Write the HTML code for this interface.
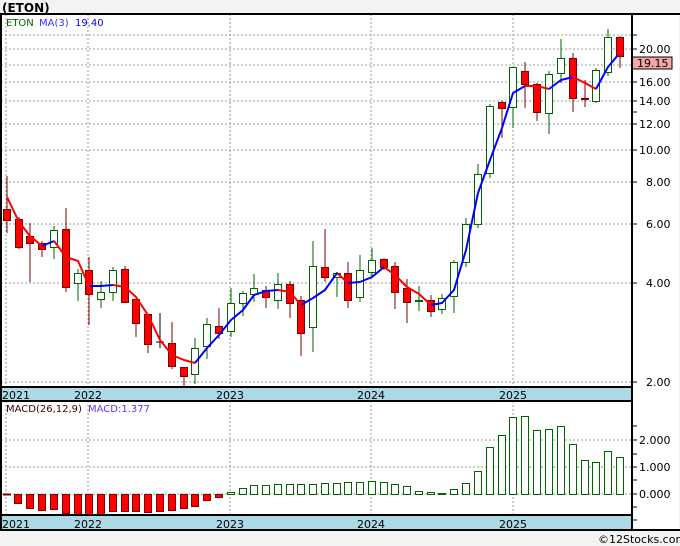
<!DOCTYPE html>
<html><head><meta charset="utf-8"><style>
html,body{margin:0;padding:0;background:#f3f3f3;}
svg{display:block;font-family:"DejaVu Sans","Liberation Sans",sans-serif;}
</style></head><body>
<svg width="680" height="546" viewBox="0 0 680 546" xmlns="http://www.w3.org/2000/svg">
<rect x="0" y="0" width="680" height="546" fill="#f3f3f3"/>
<text x="2" y="12" font-size="12" font-weight="bold" fill="#000">(ETON)</text>
<!-- panels -->
<rect x="1" y="14" width="678" height="516" fill="#fff"/>
<rect x="1" y="387" width="631" height="14" fill="#add8e6"/>
<rect x="1" y="515" width="631" height="15" fill="#add8e6"/>
<!-- grid -->
<g stroke="#999" stroke-dasharray="2,2" stroke-width="1">
<line x1="6" y1="14" x2="6" y2="387"/><line x1="88" y1="14" x2="88" y2="387"/><line x1="230" y1="14" x2="230" y2="387"/><line x1="371" y1="14" x2="371" y2="387"/><line x1="513" y1="14" x2="513" y2="387"/>
<line x1="6" y1="401" x2="6" y2="515"/><line x1="88" y1="401" x2="88" y2="515"/><line x1="230" y1="401" x2="230" y2="515"/><line x1="371" y1="401" x2="371" y2="515"/><line x1="513" y1="401" x2="513" y2="515"/>
<line x1="1" y1="35" x2="632" y2="35"/><line x1="1" y1="49" x2="632" y2="49"/><line x1="1" y1="65" x2="632" y2="65"/><line x1="1" y1="82" x2="632" y2="82"/><line x1="1" y1="101" x2="632" y2="101"/><line x1="1" y1="124" x2="632" y2="124"/><line x1="1" y1="150" x2="632" y2="150"/><line x1="1" y1="182" x2="632" y2="182"/><line x1="1" y1="224" x2="632" y2="224"/><line x1="1" y1="283" x2="632" y2="283"/><line x1="1" y1="382" x2="632" y2="382"/>
<line x1="1" y1="440" x2="632" y2="440"/><line x1="1" y1="467" x2="632" y2="467"/><line x1="1" y1="494" x2="632" y2="494"/>
</g>
<!-- axis ticks -->
<g stroke="#000" stroke-width="1">
<line x1="632" y1="35" x2="637" y2="35"/><line x1="632" y1="49" x2="637" y2="49"/><line x1="632" y1="65" x2="637" y2="65"/><line x1="632" y1="82" x2="637" y2="82"/><line x1="632" y1="101" x2="637" y2="101"/><line x1="632" y1="112" x2="637" y2="112"/><line x1="632" y1="124" x2="637" y2="124"/><line x1="632" y1="150" x2="637" y2="150"/><line x1="632" y1="182" x2="637" y2="182"/><line x1="632" y1="224" x2="637" y2="224"/><line x1="632" y1="283" x2="637" y2="283"/><line x1="632" y1="382" x2="637" y2="382"/>
<line x1="632" y1="426" x2="637" y2="426"/><line x1="632" y1="440" x2="637" y2="440"/><line x1="632" y1="454" x2="637" y2="454"/><line x1="632" y1="467" x2="637" y2="467"/><line x1="632" y1="480" x2="637" y2="480"/><line x1="632" y1="494" x2="637" y2="494"/><line x1="632" y1="507" x2="637" y2="507"/><line x1="632" y1="520" x2="637" y2="520"/>
</g>
<g font-size="11" fill="#000">
<text x="639" y="53">20.00</text><text x="639" y="86">16.00</text><text x="639" y="105">14.00</text><text x="639" y="128">12.00</text><text x="639" y="154">10.00</text><text x="646" y="186">8.00</text><text x="646" y="228">6.00</text><text x="646" y="287">4.00</text><text x="646" y="386">2.00</text>
<text x="639" y="444">2.000</text><text x="639" y="471">1.000</text><text x="639" y="498">0.000</text>
</g>
<rect x="632" y="57" width="40" height="12" fill="#f4a6a6" stroke="#000"/>
<text x="637" y="67" font-size="11" fill="#000">19.15</text>
<!-- year labels -->
<g font-size="11" fill="#000">
<text x="2" y="399">2021</text><text x="74" y="399">2022</text><text x="216" y="399">2023</text><text x="357" y="399">2024</text><text x="499" y="399">2025</text>
<text x="2" y="528">2021</text><text x="74" y="528">2022</text><text x="216" y="528">2023</text><text x="357" y="528">2024</text><text x="499" y="528">2025</text>
</g>
<!-- candles -->
<g stroke-width="1">
<g stroke="#800000" fill="#f00">
<line x1="7" y1="176" x2="7" y2="233"/><rect x="3.5" y="209.5" width="7" height="11"/>
<line x1="19" y1="217" x2="19" y2="249"/><rect x="15.5" y="219.5" width="7" height="28"/>
<line x1="30" y1="223" x2="30" y2="282"/><rect x="26.5" y="236.5" width="7" height="7"/>
<line x1="42" y1="241" x2="42" y2="257"/><rect x="38.5" y="243.5" width="7" height="6"/>
<line x1="66" y1="208" x2="66" y2="292"/><rect x="62.5" y="229.5" width="7" height="58"/>
<line x1="89" y1="257" x2="89" y2="325"/><rect x="85.5" y="270.5" width="7" height="24"/>
<line x1="125" y1="266" x2="125" y2="302"/><rect x="121.5" y="269.5" width="7" height="33"/>
<line x1="136" y1="299" x2="136" y2="337"/><rect x="132.5" y="299.5" width="7" height="24"/>
<line x1="148" y1="314" x2="148" y2="353"/><rect x="144.5" y="314.5" width="7" height="30"/>
<line x1="172" y1="322" x2="172" y2="369"/><rect x="168.5" y="343.5" width="7" height="23"/>
<line x1="184" y1="367" x2="184" y2="387"/><rect x="180.5" y="367.5" width="7" height="9"/>
<line x1="219" y1="308" x2="219" y2="339"/><rect x="215.5" y="326.5" width="7" height="7"/>
<line x1="266" y1="286" x2="266" y2="308"/><rect x="262.5" y="290.5" width="7" height="7"/>
<line x1="290" y1="281" x2="290" y2="318"/><rect x="286.5" y="284.5" width="7" height="19"/>
<line x1="301" y1="296" x2="301" y2="356"/><rect x="297.5" y="300.5" width="7" height="33"/>
<line x1="325" y1="229" x2="325" y2="282"/><rect x="321.5" y="267.5" width="7" height="10"/>
<line x1="348" y1="262" x2="348" y2="308"/><rect x="344.5" y="273.5" width="7" height="27"/>
<line x1="384" y1="258" x2="384" y2="270"/><rect x="380.5" y="259.5" width="7" height="8"/>
<line x1="395" y1="262" x2="395" y2="309"/><rect x="391.5" y="266.5" width="7" height="26"/>
<line x1="407" y1="279" x2="407" y2="323"/><rect x="403.5" y="288.5" width="7" height="14"/>
<line x1="431" y1="295" x2="431" y2="317"/><rect x="427.5" y="300.5" width="7" height="11"/>
<line x1="502" y1="101" x2="502" y2="138"/><rect x="498.5" y="102.5" width="7" height="6"/>
<line x1="525" y1="62" x2="525" y2="108"/><rect x="521.5" y="71.5" width="7" height="13"/>
<line x1="537" y1="83" x2="537" y2="121"/><rect x="533.5" y="84.5" width="7" height="28"/>
<line x1="573" y1="53" x2="573" y2="112"/><rect x="569.5" y="58.5" width="7" height="40"/>
<line x1="585" y1="80" x2="585" y2="107"/><line x1="581" y1="99" x2="589" y2="99" stroke-width="2"/>
<line x1="620" y1="36" x2="620" y2="68"/><rect x="616.5" y="37.5" width="7" height="19"/>
</g>
<g stroke="#000"><line x1="160" y1="313" x2="160" y2="348"/><line x1="156" y1="342" x2="164" y2="342"/></g>
<g stroke="#006400" fill="#fff">
<line x1="54" y1="226" x2="54" y2="259"/><rect x="50.5" y="230.5" width="7" height="17"/>
<line x1="78" y1="269" x2="78" y2="301"/><rect x="74.5" y="273.5" width="7" height="10"/>
<line x1="101" y1="281" x2="101" y2="308"/><rect x="97.5" y="292.5" width="7" height="7"/>
<line x1="113" y1="267" x2="113" y2="301"/><rect x="109.5" y="270.5" width="7" height="22"/>
<line x1="195" y1="338" x2="195" y2="384"/><rect x="191.5" y="348.5" width="7" height="26"/>
<line x1="207" y1="318" x2="207" y2="359"/><rect x="203.5" y="324.5" width="7" height="22"/>
<line x1="231" y1="288" x2="231" y2="337"/><rect x="227.5" y="303.5" width="7" height="28"/>
<line x1="243" y1="291" x2="243" y2="316"/><rect x="239.5" y="293.5" width="7" height="10"/>
<line x1="254" y1="274" x2="254" y2="302"/><rect x="250.5" y="288.5" width="7" height="6"/>
<line x1="278" y1="273" x2="278" y2="309"/><rect x="274.5" y="284.5" width="7" height="16"/>
<line x1="313" y1="241" x2="313" y2="352"/><rect x="309.5" y="266.5" width="7" height="61"/>
<line x1="337" y1="272" x2="337" y2="297"/><rect x="333.5" y="273.5" width="7" height="4"/>
<line x1="360" y1="255" x2="360" y2="302"/><rect x="356.5" y="270.5" width="7" height="27"/>
<line x1="372" y1="248" x2="372" y2="278"/><rect x="368.5" y="260.5" width="7" height="12"/>
<line x1="419" y1="286" x2="419" y2="311"/><line x1="415" y1="301" x2="423" y2="301" stroke-width="2"/>
<line x1="442" y1="294" x2="442" y2="314"/><rect x="438.5" y="298.5" width="7" height="11"/>
<line x1="454" y1="260" x2="454" y2="313"/><rect x="450.5" y="262.5" width="7" height="34"/>
<line x1="466" y1="218" x2="466" y2="267"/><rect x="462.5" y="224.5" width="7" height="38"/>
<line x1="478" y1="164" x2="478" y2="228"/><rect x="474.5" y="174.5" width="7" height="50"/>
<line x1="490" y1="104" x2="490" y2="178"/><rect x="486.5" y="106.5" width="7" height="67"/>
<line x1="513" y1="67" x2="513" y2="128"/><rect x="509.5" y="67.5" width="7" height="40"/>
<line x1="549" y1="71" x2="549" y2="134"/><rect x="545.5" y="74.5" width="7" height="39"/>
<line x1="561" y1="39" x2="561" y2="83"/><rect x="557.5" y="58.5" width="7" height="15"/>
<line x1="596" y1="68" x2="596" y2="103"/><rect x="592.5" y="70.5" width="7" height="31"/>
<line x1="608" y1="29" x2="608" y2="76"/><rect x="604.5" y="37.5" width="7" height="35"/>
</g>
</g>
<!-- MA -->
<g fill="none" stroke-width="2" stroke-linejoin="round">
<g stroke="#ff0000">
<polyline points="7,197 19,222 30,236 42,246"/>
<polyline points="54,241 66,257 78,261 89,286"/>
<polyline points="113,285 125,287 136,297 148,315 160,340 172,355 184,360 195,363"/>
<polyline points="278,290 290,292 301,305"/>
<polyline points="337,273 348,283"/>
<polyline points="384,267 395,275 407,287 419,294 431,305"/>
<polyline points="525,86 537,86 549,89"/>
<polyline points="573,77 585,83 596,89"/>
</g>
<g stroke="#0000ff">
<polyline points="42,246 54,241"/>
<polyline points="89,286 101,286 113,285"/>
<polyline points="195,363 207,348 219,335 231,320 243,310 254,295 266,291 278,290"/>
<polyline points="301,305 313,298 325,290 337,273"/>
<polyline points="348,283 360,282 372,277 384,267"/>
<polyline points="431,305 442,303 454,290 466,250 478,193 490,160 502,128 513,93 525,86"/>
<polyline points="549,89 561,80 573,77"/>
<polyline points="596,89 608,67 618,55"/>
</g>
</g>
<!-- MACD bars -->
<g stroke="#800000" fill="#f00">
<line x1="3" y1="494.5" x2="11" y2="494.5" stroke-width="2"/>
<rect x="14.5" y="494.5" width="7" height="9"/><rect x="26.5" y="494.5" width="7" height="14"/><rect x="38.5" y="494.5" width="7" height="16"/><rect x="50.5" y="494.5" width="7" height="15"/><rect x="62.5" y="494.5" width="7" height="19"/><rect x="74.5" y="494.5" width="7" height="21"/><rect x="85.5" y="494.5" width="7" height="21"/><rect x="97.5" y="494.5" width="7" height="21"/><rect x="109.5" y="494.5" width="7" height="17"/><rect x="121.5" y="494.5" width="7" height="17"/><rect x="132.5" y="494.5" width="7" height="17"/><rect x="144.5" y="494.5" width="7" height="18"/><rect x="156.5" y="494.5" width="7" height="17"/><rect x="168.5" y="494.5" width="7" height="16"/><rect x="180.5" y="494.5" width="7" height="14"/><rect x="191.5" y="494.5" width="7" height="12"/><rect x="203.5" y="494.5" width="7" height="6"/><rect x="215.5" y="494.5" width="7" height="3"/>
</g>
<g stroke="#006400" fill="#fff">
<rect x="227.5" y="492.5" width="7" height="2"/><rect x="239.5" y="488.5" width="7" height="6"/><rect x="250.5" y="485.5" width="7" height="9"/><rect x="262.5" y="485.5" width="7" height="9"/><rect x="274.5" y="484.5" width="7" height="10"/><rect x="286.5" y="484.5" width="7" height="10"/><rect x="297.5" y="484.5" width="7" height="10"/><rect x="309.5" y="484.5" width="7" height="10"/><rect x="321.5" y="483.5" width="7" height="11"/><rect x="333.5" y="483.5" width="7" height="11"/><rect x="344.5" y="482.5" width="7" height="12"/><rect x="356.5" y="482.5" width="7" height="12"/><rect x="368.5" y="481.5" width="7" height="13"/><rect x="380.5" y="482.5" width="7" height="12"/><rect x="391.5" y="484.5" width="7" height="10"/><rect x="403.5" y="486.5" width="7" height="8"/><rect x="415.5" y="491.5" width="7" height="3"/><rect x="427.5" y="492.5" width="7" height="2"/>
<line x1="438" y1="494" x2="446" y2="494" stroke-width="2"/>
<rect x="450.5" y="489.5" width="7" height="5"/><rect x="462.5" y="483.5" width="7" height="11"/><rect x="474.5" y="471.5" width="7" height="23"/><rect x="486.5" y="447.5" width="7" height="47"/><rect x="498.5" y="435.5" width="7" height="59"/><rect x="509.5" y="417.5" width="7" height="77"/><rect x="521.5" y="416.5" width="7" height="78"/><rect x="533.5" y="430.5" width="7" height="64"/><rect x="545.5" y="429.5" width="7" height="65"/><rect x="557.5" y="426.5" width="7" height="68"/><rect x="569.5" y="444.5" width="7" height="50"/><rect x="581.5" y="460.5" width="7" height="34"/><rect x="592.5" y="462.5" width="7" height="32"/><rect x="604.5" y="451.5" width="7" height="43"/><rect x="616.5" y="457.5" width="7" height="37"/>
</g>
<!-- legends -->
<g font-size="10">
<text x="6" y="26" fill="#006400">ETON</text><text x="39" y="26" fill="#3333ff">MA(3)</text><text x="75" y="26" fill="#0000ff">19.40</text>
<text x="6" y="412" fill="#400000">MACD(26,12,9)</text><text x="88" y="412" fill="#6633ff">MACD:1.377</text>
</g>
<!-- borders -->
<g stroke="#000" stroke-width="2" fill="none">
<line x1="0" y1="14" x2="680" y2="14"/>
<line x1="1" y1="14" x2="1" y2="531"/>
<line x1="632" y1="14" x2="632" y2="531"/>
<line x1="0" y1="530" x2="680" y2="530"/>
<line x1="1" y1="387" x2="632" y2="387"/><line x1="1" y1="401" x2="632" y2="401"/>
<line x1="1" y1="515" x2="632" y2="515"/>
</g>
<text x="598" y="543" font-size="11" fill="#000">©12Stocks.com</text>
</svg>
</body></html>
